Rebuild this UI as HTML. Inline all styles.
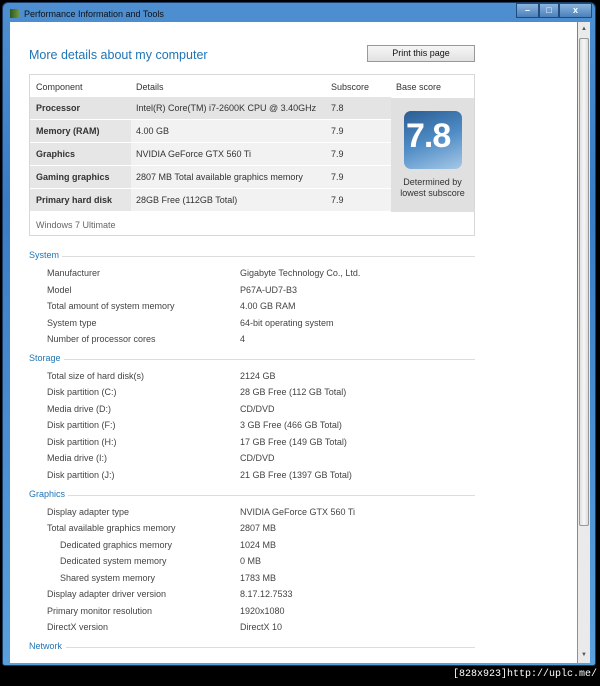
<!DOCTYPE html>
<html><head><style>
body{margin:0;width:600px;height:686px;background:#000;position:relative;overflow:hidden;font-family:"Liberation Sans",sans-serif;font-size:9px;color:#333}
.frame{position:absolute;left:2px;top:2px;width:594px;height:664px;background:linear-gradient(#4d8fd0,#3a7cc4 30%,#5aa0dc);border-radius:6px 6px 3px 3px;border:1px solid #1a3c66;box-sizing:border-box}
.title{position:absolute;left:24px;top:9px;font-size:9px;color:#111}
.ticon{position:absolute;left:10px;top:9px;width:10px;height:9px;background:linear-gradient(90deg,#2a5a1a,#7a9a4a)}
.btns{position:absolute;left:516px;top:3px;width:76px;height:15px}
.btns div{position:absolute;top:0;height:15px;border:1px solid #224a7a;box-sizing:border-box;color:#fff;font-size:9px;text-align:center;line-height:13px;font-weight:bold}
.content{position:absolute;left:10px;top:22px;width:567px;height:641px;background:#fff}
.sb{position:absolute;left:578px;top:22px;width:12px;height:641px;background:#eaeaea}
.thumb{position:absolute;left:579px;top:38px;width:10px;height:488px;background:linear-gradient(90deg,#e0e0e0,#f6f6f6,#ddd);border:1px solid #999;box-sizing:border-box;border-radius:2px}
.a{position:absolute;white-space:nowrap}
h1{position:absolute;left:29px;top:48px;margin:0;font-weight:normal;font-size:12.5px;color:#1f74b5}
.print{position:absolute;left:367px;top:45px;width:108px;height:17px;border:1px solid #999;box-sizing:border-box;background:linear-gradient(#f6f6f6,#e2e2e2);text-align:center;line-height:15px;font-size:9px;color:#111}
.tbl{position:absolute;left:29px;top:74px;width:446px;height:162px;border:1px solid #d8d8d8;box-sizing:border-box;background:#fff}
.r{position:absolute;left:0;width:361px;height:22px}
.c1{position:absolute;left:0;width:101px;height:22px;background:#e6e6e6}
.c2{position:absolute;left:101px;width:195px;height:22px;background:#f2f2f2}
.c3{position:absolute;left:296px;width:65px;height:22px;background:#f2f2f2}
.r span{position:absolute;top:6px;white-space:nowrap}
.sec{position:absolute;left:29px;color:#1f74b5;font-size:9px}
.line{position:absolute;height:1px;background:#dcdcdc;left:70px;width:405px}
.row{position:absolute;color:#444}
</style></head><body>
<div class="frame"></div>
<div class="ticon"></div>
<div class="title">Performance Information and Tools</div>
<div class="btns"><div style="left:0;width:23px;background:linear-gradient(#8ab4de,#4c80bc)">–</div><div style="left:23px;width:20px;background:linear-gradient(#8ab4de,#4c80bc)">□</div><div style="left:43px;width:33px;background:linear-gradient(#8ab4de,#4c80bc)">x</div></div>
<div class="content"></div>
<div class="sb"></div><div class="thumb"></div>
<div class="a" style="left:581px;top:26px;font-size:6px;color:#555">▲</div>
<div class="a" style="left:581px;top:652px;font-size:6px;color:#555">▼</div>
<h1>More details about my computer</h1>
<div class="print">Print this page</div>
<div class="tbl">
<span class="a" style="left:6px;top:7px">Component</span><span class="a" style="left:106px;top:7px">Details</span><span class="a" style="left:301px;top:7px">Subscore</span><span class="a" style="left:366px;top:7px">Base score</span>
<div style="position:absolute;left:361px;top:23px;width:83px;height:114px;background:#e0e0e0"></div>
<div style="position:absolute;left:374px;top:36px;width:58px;height:58px;border-radius:7px;background:linear-gradient(160deg,#2a5d92,#4f8cc6 50%,#a6c8e6);"></div>
<div class="a" style="left:376px;top:42px;font-size:34px;font-weight:bold;color:#fff;letter-spacing:-1px">7.8</div>
<div class="a" style="left:361px;top:102px;width:83px;text-align:center;line-height:11px;white-space:normal">Determined by lowest subscore</div>
<div class="r" style="top:22px"><div class="c1" style="background:#e4e4e4"></div><div class="c2" style="background:#e4e4e4"></div><div class="c3" style="background:#e4e4e4"></div><span style="left:6px;font-weight:bold">Processor</span><span style="left:106px">Intel(R) Core(TM) i7-2600K CPU @ 3.40GHz</span><span style="left:301px">7.8</span></div>
<div class="r" style="top:45px"><div class="c1"></div><div class="c2"></div><div class="c3"></div><span style="left:6px;font-weight:bold">Memory (RAM)</span><span style="left:106px">4.00 GB</span><span style="left:301px">7.9</span></div>
<div class="r" style="top:68px"><div class="c1"></div><div class="c2"></div><div class="c3"></div><span style="left:6px;font-weight:bold">Graphics</span><span style="left:106px">NVIDIA GeForce GTX 560 Ti</span><span style="left:301px">7.9</span></div>
<div class="r" style="top:91px"><div class="c1"></div><div class="c2"></div><div class="c3"></div><span style="left:6px;font-weight:bold">Gaming graphics</span><span style="left:106px">2807 MB Total available graphics memory</span><span style="left:301px">7.9</span></div>
<div class="r" style="top:114px"><div class="c1"></div><div class="c2"></div><div class="c3"></div><span style="left:6px;font-weight:bold">Primary hard disk</span><span style="left:106px">28GB Free (112GB Total)</span><span style="left:301px">7.9</span></div>
<span class="a" style="left:6px;top:145px;color:#666">Windows 7 Ultimate</span>
</div>

<div class="sec" style="top:250px">System</div><div class="line" style="top:256px;left:62px;width:413px"></div>
<div class="row a" style="left:47px;top:268px">Manufacturer</div><div class="row a" style="left:240px;top:268px">Gigabyte Technology Co., Ltd.</div>
<div class="row a" style="left:47px;top:285px">Model</div><div class="row a" style="left:240px;top:285px">P67A-UD7-B3</div>
<div class="row a" style="left:47px;top:301px">Total amount of system memory</div><div class="row a" style="left:240px;top:301px">4.00 GB RAM</div>
<div class="row a" style="left:47px;top:318px">System type</div><div class="row a" style="left:240px;top:318px">64-bit operating system</div>
<div class="row a" style="left:47px;top:334px">Number of processor cores</div><div class="row a" style="left:240px;top:334px">4</div>

<div class="sec" style="top:353px">Storage</div><div class="line" style="top:359px;left:64px;width:411px"></div>
<div class="row a" style="left:47px;top:371px">Total size of hard disk(s)</div><div class="row a" style="left:240px;top:371px">2124 GB</div>
<div class="row a" style="left:47px;top:387px">Disk partition (C:)</div><div class="row a" style="left:240px;top:387px">28 GB Free (112 GB Total)</div>
<div class="row a" style="left:47px;top:404px">Media drive (D:)</div><div class="row a" style="left:240px;top:404px">CD/DVD</div>
<div class="row a" style="left:47px;top:420px">Disk partition (F:)</div><div class="row a" style="left:240px;top:420px">3 GB Free (466 GB Total)</div>
<div class="row a" style="left:47px;top:437px">Disk partition (H:)</div><div class="row a" style="left:240px;top:437px">17 GB Free (149 GB Total)</div>
<div class="row a" style="left:47px;top:453px">Media drive (I:)</div><div class="row a" style="left:240px;top:453px">CD/DVD</div>
<div class="row a" style="left:47px;top:470px">Disk partition (J:)</div><div class="row a" style="left:240px;top:470px">21 GB Free (1397 GB Total)</div>

<div class="sec" style="top:489px">Graphics</div><div class="line" style="top:495px;left:68px;width:407px"></div>
<div class="row a" style="left:47px;top:507px">Display adapter type</div><div class="row a" style="left:240px;top:507px">NVIDIA GeForce GTX 560 Ti</div>
<div class="row a" style="left:47px;top:523px">Total available graphics memory</div><div class="row a" style="left:240px;top:523px">2807 MB</div>
<div class="row a" style="left:60px;top:540px">Dedicated graphics memory</div><div class="row a" style="left:240px;top:540px">1024 MB</div>
<div class="row a" style="left:60px;top:556px">Dedicated system memory</div><div class="row a" style="left:240px;top:556px">0 MB</div>
<div class="row a" style="left:60px;top:573px">Shared system memory</div><div class="row a" style="left:240px;top:573px">1783 MB</div>
<div class="row a" style="left:47px;top:589px">Display adapter driver version</div><div class="row a" style="left:240px;top:589px">8.17.12.7533</div>
<div class="row a" style="left:47px;top:606px">Primary monitor resolution</div><div class="row a" style="left:240px;top:606px">1920x1080</div>
<div class="row a" style="left:47px;top:622px">DirectX version</div><div class="row a" style="left:240px;top:622px">DirectX 10</div>

<div class="sec" style="top:641px">Network</div><div class="line" style="top:647px;left:66px;width:409px"></div>

<div class="a" style="left:453px;top:669px;color:#fff;font-family:'Liberation Mono',monospace;font-size:10px">[828x923]http://uplc.me/</div>
</body></html>
